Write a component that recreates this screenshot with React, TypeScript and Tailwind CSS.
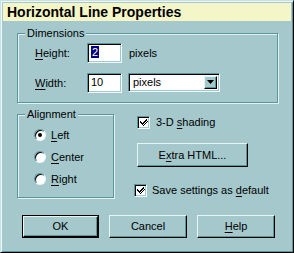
import React from 'react';

const BG = 'bg-[#a4c8cc]';

function U({ children }: { children: React.ReactNode }) {
  return <span className="underline underline-offset-[2px] decoration-[1px]">{children}</span>;
}

function GroupBox({ label, className, children }: { label: string; className: string; children: React.ReactNode }) {
  return (
    <div className={'relative border border-[#5f9499] shadow-[1px_1px_0_#e2f3f4,inset_1px_1px_0_#e2f3f4] ' + className}>
      <span className={'absolute -top-[8px] left-[7px] px-[2px] leading-[14px] ' + BG}>{label}</span>
      {children}
    </div>
  );
}

function Sunken({ className, children }: { className: string; children?: React.ReactNode }) {
  return (
    <div className={'border border-t-[#5f9499] border-l-[#5f9499] border-r-[#eef8f9] border-b-[#eef8f9] shadow-[inset_1px_1px_0_#000,inset_-1px_-1px_0_#a4c8cc] bg-white ' + className}>
      {children}
    </div>
  );
}

function Check() {
  return (
    <Sunken className="w-[13px] h-[13px] flex items-center justify-center">
      <svg width="9" height="9" viewBox="0 0 9 9">
        <path d="M1 3h1v1h1v1h1V4h1V3h1V2h1V1h1v2h-1v1h-1v1h-1v1h-1v1h-1V6h-1V5h-1V4H1z" fill="#000" />
        <path d="M1 3v2h1v1h1v1h1v1h1V7h1V6h1V5h1V4h1V3h-1v1h-1v1h-1v1h-1v1H4V6H3V5H2V4H1z" fill="#000" />
      </svg>
    </Sunken>
  );
}

function Radio({ checked, children }: { checked?: boolean; children: React.ReactNode }) {
  return (
    <div className="flex items-center h-[22px]">
      <div className="w-[12px] h-[12px] rounded-full border border-t-[#5f9499] border-l-[#5f9499] border-r-[#eef8f9] border-b-[#eef8f9] bg-white shadow-[inset_1px_1px_0_#000] flex items-center justify-center">
        {checked && <div className="w-[4px] h-[4px] rounded-full bg-black" />}
      </div>
      <span className="ml-[5px]">{children}</span>
    </div>
  );
}

function Button({ className, children, isDefault }: { className: string; children: React.ReactNode; isDefault?: boolean }) {
  return (
    <div className={(isDefault ? 'border border-black ' : '') + className}>
      <div className="h-full border border-t-[#e6f5f6] border-l-[#e6f5f6] border-r-black border-b-black shadow-[inset_-1px_-1px_0_#5f9499] flex items-center justify-center">
        {children}
      </div>
    </div>
  );
}

export default function App() {
  return (
    <div
      className={'w-[294px] h-[253px] border border-t-[#c6e2e4] border-l-[#c6e2e4] border-r-black border-b-black shadow-[inset_1px_1px_0_#eef8f9,inset_-1px_-1px_0_#5f9499] p-[2px] text-[11px] text-black ' + BG}
      style={{ fontFamily: '"Liberation Sans", Arial, sans-serif' }}
    >
      <div className="h-[18px] bg-[#f5f6c8] pl-[4px] text-[14px] font-bold leading-[18px]">Horizontal Line Properties</div>

      <div className="pl-[14px]">
        <GroupBox label="Dimensions" className="mt-[12px] w-[261px] h-[70px] pl-[17px] pt-[9px]">
          <div className="flex items-center h-[20px]">
            <span className="w-[52px]"><U>H</U>eight:</span>
            <Sunken className="w-[35px] h-[20px] pl-[3px] leading-[16px]">
              <span className="bg-[#000080] text-white px-[1px]">2</span>
            </Sunken>
            <span className="ml-[7px]">pixels</span>
          </div>
          <div className="flex items-center h-[20px] mt-[10px]">
            <span className="w-[52px]"><U>W</U>idth:</span>
            <Sunken className="w-[35px] h-[20px] pl-[3px] leading-[16px]">10</Sunken>
            <Sunken className="ml-[6px] -mt-[2px] w-[92px] h-[19px] flex items-center justify-between p-[2px]">
              <span className="pl-[2px]">pixels</span>
              <div className="w-[13px] h-[13px] bg-[#a4c8cc] border border-t-[#e6f5f6] border-l-[#e6f5f6] border-r-black border-b-black shadow-[inset_-1px_-1px_0_#5f9499] flex items-center justify-center">
                <svg width="7" height="4" viewBox="0 0 7 4"><path d="M0 0h7L3.5 4z" fill="#000" /></svg>
              </div>
            </Sunken>
          </div>
        </GroupBox>

        <div className="flex mt-[11px]">
          <GroupBox label="Alignment" className="w-[97px] h-[84px] pl-[16px] pt-[9px]">
            <Radio checked><U>L</U>eft</Radio>
            <Radio><U>C</U>enter</Radio>
            <Radio><U>R</U>ight</Radio>
          </GroupBox>

          <div className="ml-[23px] pt-[2px] flex flex-col">
            <div className="flex items-center h-[13px]">
              <Check />
              <span className="ml-[6px]">3-D <U>s</U>hading</span>
            </div>
            <Button className="mt-[14px] w-[111px] h-[24px]">E<U>x</U>tra HTML...</Button>
            <div className="flex items-center h-[13px] mt-[17px] -ml-[3px]">
              <Check />
              <span className="ml-[5px]">Save settings as <U>d</U>efault</span>
            </div>
          </div>
        </div>

        <div className="flex mt-[17px] ml-[5px] gap-[10px]">
          <Button isDefault className="w-[77px] h-[23px]">OK</Button>
          <Button className="w-[78px] h-[23px]">Cancel</Button>
          <Button className="w-[78px] h-[23px]"><U>H</U>elp</Button>
        </div>
      </div>
    </div>
  );
}
